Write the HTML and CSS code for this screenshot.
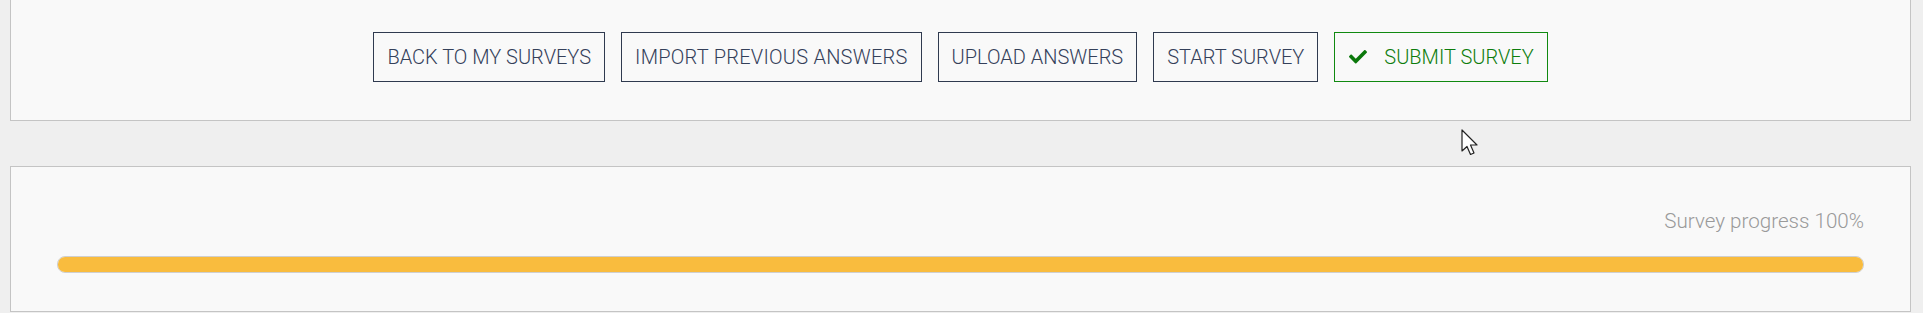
FILE: index.html
```html
<!DOCTYPE html>
<html lang="en">
<head>
    <meta charset="UTF-8">
    <meta name="viewport" content="width=device-width, initial-scale=1.0">
    <title>Survey</title>
    <link rel="stylesheet" href="styles.css">
</head>
<body>
    <div class="page">
        <div class="panel actions-panel">
            <div class="actions">
                <button type="button" class="btn">Back to my surveys</button>
                <button type="button" class="btn btn-wide">Import previous answers</button>
                <button type="button" class="btn">Upload answers</button>
                <button type="button" class="btn">Start survey</button>
                <button type="button" class="btn btn-submit">
                    <svg class="check" viewBox="0 0 512 390" aria-hidden="true">
                        <path d="M173.9 370.4l-166.4-166.4c-10-10-10-26.2 0-36.2l36.2-36.2c10-10 26.2-10 36.2 0L192 243.7 432.1 3.6c10-10 26.2-10 36.2 0l36.2 36.2c10 10 10 26.2 0 36.2l-294.4 294.4c-10 10-26.2 10-36.2 0z"/>
                    </svg>
                    Submit survey
                </button>
            </div>
        </div>

        <div class="panel progress-panel">
            <p class="progress-label">Survey progress 100%</p>
            <div class="progress-track">
                <div class="progress-fill" style="width: 100%"></div>
            </div>
        </div>
    </div>

    <svg class="cursor" viewBox="0 0 17 27" aria-hidden="true">
        <path d="M1 1 L1 22 L6 17.5 L9.5 25.5 L13 24 L9.5 16 L16 16 Z" fill="#fff" stroke="#222" stroke-width="1.2" stroke-linejoin="round"/>
    </svg>
</body>
</html>
```

FILE: styles.css
```css
body {
    margin: 0;
    background-color: #efefef;
    font-family: Roboto, 'Liberation Sans', sans-serif;
}

.page {
    padding: 0 12px 0 10px;
}

.panel {
    background-color: #f9f9f9;
    border: 1px solid #c4c4c4;
}

.actions-panel {
    border-top: none;
    padding: 32px 0 38px;
}

.actions {
    display: flex;
    justify-content: center;
    gap: 16px;
}

.btn {
    display: flex;
    align-items: center;
    font-family: Roboto, 'Liberation Sans', sans-serif;
    font-weight: 300;
    font-size: 20px;
    line-height: 24px;
    text-transform: uppercase;
    color: #34405a;
    background: transparent;
    border: 1px solid #2f3a4f;
    border-radius: 0;
    padding: 12px 13px;
    cursor: pointer;
}

.btn-wide {
    letter-spacing: 0.25px;
}

.btn-submit {
    color: #0d7d0d;
    border-color: #118a11;
    padding-left: 14px;
}

.check {
    width: 18px;
    height: 14px;
    margin-right: 17px;
    fill: #0b780b;
}

.progress-panel {
    margin-top: 45px;
    padding: 42px 46px 38px;
}

.progress-label {
    margin: 0 0 23px;
    text-align: right;
    font-size: 20.6px;
    line-height: 24px;
    font-weight: 300;
    color: #9a9a9a;
}

.progress-track {
    height: 15px;
    border: 1px solid #cfcfcf;
    border-radius: 8px;
    background-color: #f4f4f4;
    overflow: hidden;
}

.progress-fill {
    height: 100%;
    background-color: #f9bc3e;
}

.cursor {
    position: absolute;
    left: 1461px;
    top: 129px;
    width: 17px;
    height: 27px;
}
```
